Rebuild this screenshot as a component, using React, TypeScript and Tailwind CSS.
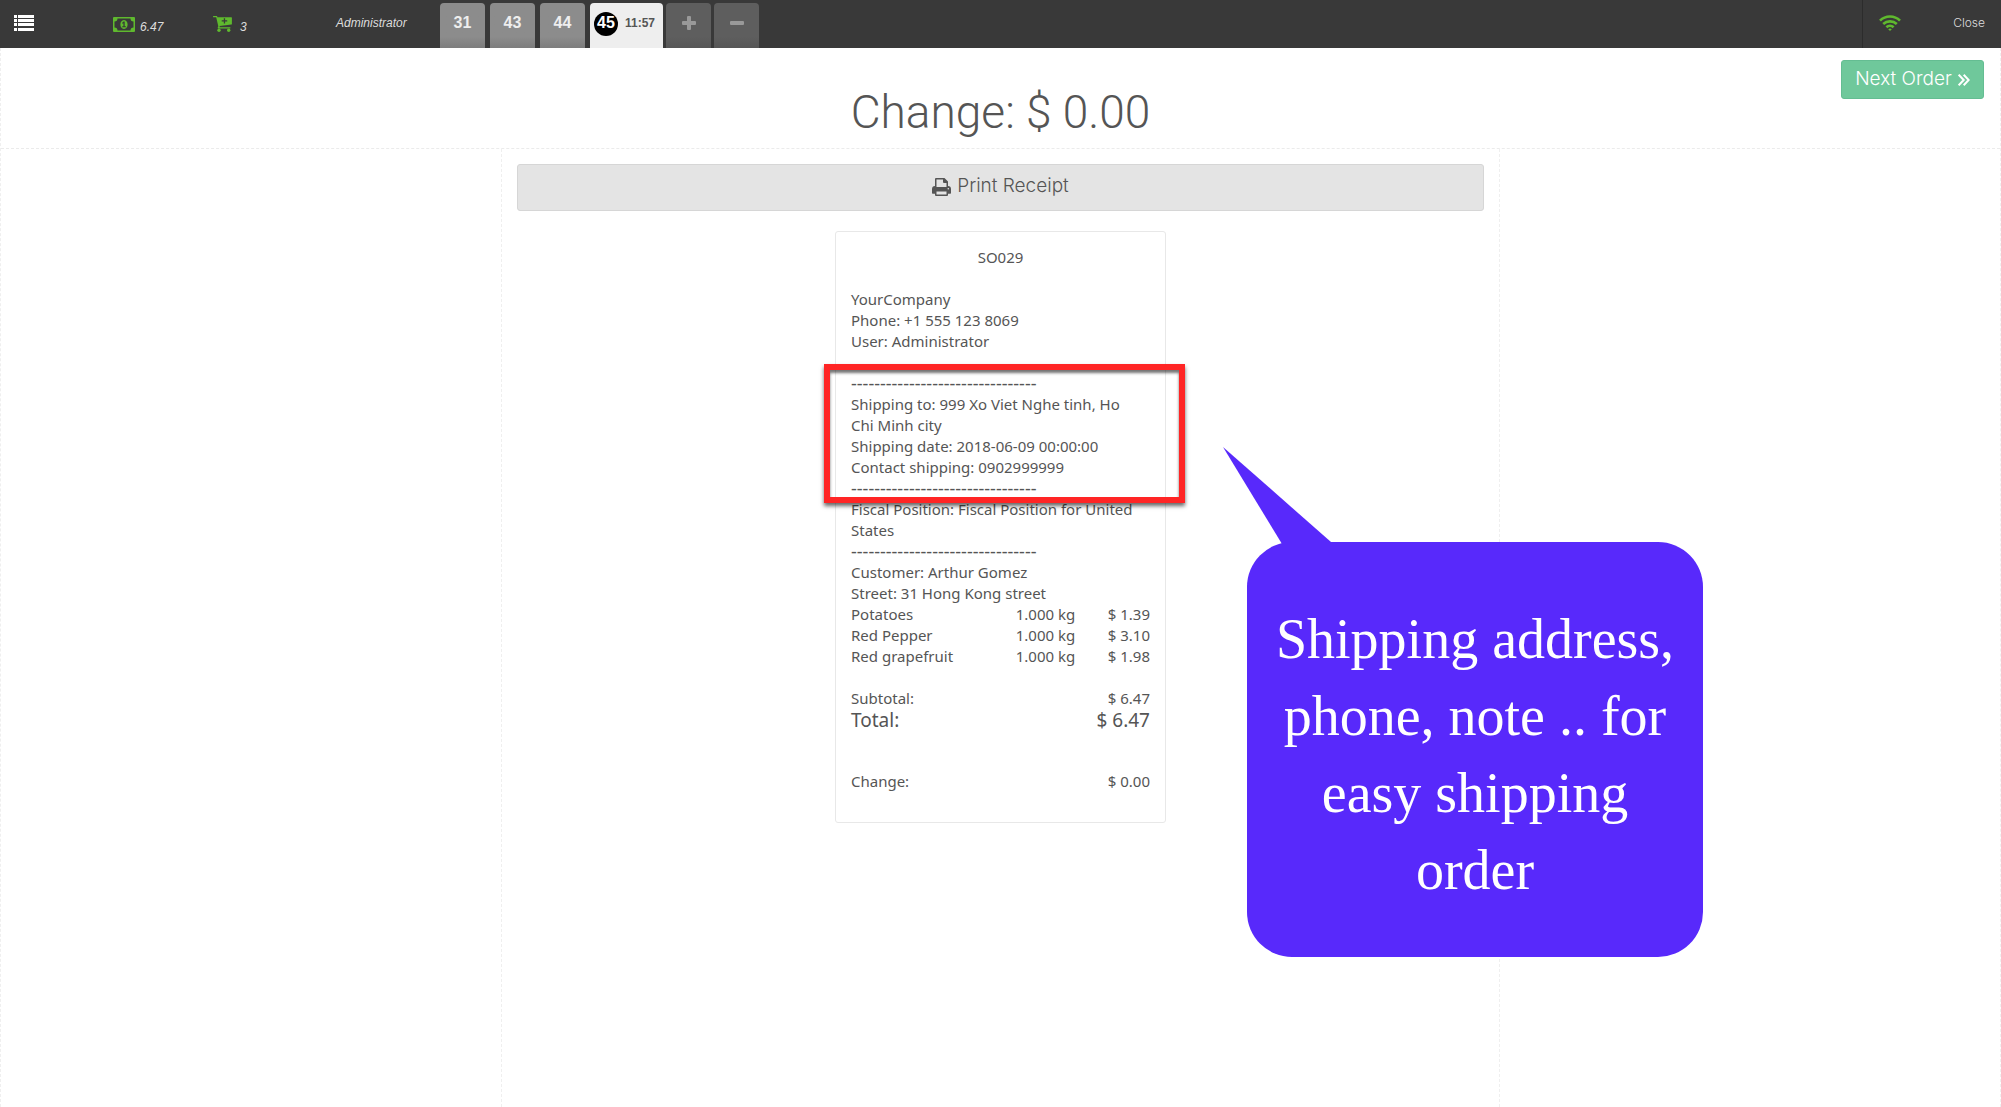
import React from "react";

function ListIcon() {
  return (
    <svg viewBox="0 0 20 16" className="h-4 w-5 fill-white" aria-hidden="true">
      {[0, 4, 8, 13].map((y) => (
        <g key={y}>
          <rect x="0" y={y} width="3" height="3" />
          <rect x="4" y={y} width="16" height="3" />
        </g>
      ))}
    </svg>
  );
}

function MoneyIcon() {
  return (
    <svg viewBox="0 0 22 15" className="h-[15px] w-[22px] fill-[#5fb92e]" aria-hidden="true">
      <path fillRule="evenodd" d="M1 0h20a1 1 0 0 1 1 1v13a1 1 0 0 1-1 1H1a1 1 0 0 1-1-1V1a1 1 0 0 1 1-1ZM4.5 1.5a3 3 0 0 1-3 3v6a3 3 0 0 1 3 3h13a3 3 0 0 1 3-3v-6a3 3 0 0 1-3-3Z" />
      <path fillRule="evenodd" d="M11 3c2.400 0 3.600 2.200 3.600 4.500S13.400 12 11 12s-3.600-2.200-3.600-4.500S8.600 3 11 3Zm-.5 1.600L9 6l.7.8.7-.5v2.900H9.200v1.100h3.700V9.200h-1.200V4.600Z" />
    </svg>
  );
}

function CartIcon() {
  return (
    <svg viewBox="0 0 19 16" className="h-4 w-[19px] fill-[#5fb92e]" aria-hidden="true">
      <path fillRule="evenodd" d="M.6 0h2.900c.5 0 .8.3.9 1.200H18.300a.6.6 0 0 1 .6.700v6a.7.7 0 0 1-.6.600L6.600 10l.1 1.200h10.200a.6.6 0 0 1 0 1.300H5.300a.6.6 0 0 1-.5-.9l.5-1.300L3.200 1.300H.6A.6.6 0 0 1 .6 0ZM10.800 2.300v2H8.700v1.300h2.100v2h1.300v-2h2.100V4.300h-2.100v-2Z" />
      <circle cx="6" cy="14.300" r="1.700" />
      <circle cx="15.700" cy="14.300" r="1.700" />
    </svg>
  );
}

function WifiIcon() {
  return (
    <svg viewBox="0 0 22 16" className="h-4 w-[22px] fill-none stroke-[#5fb92e]" strokeWidth="2.700" aria-hidden="true">
      <path d="M1 5.600a14.200 14.200 0 0 1 20 0M4.200 9a10 10 0 0 1 13.600 0M7.400 12.200a5.500 5.500 0 0 1 7.200 0" />
      <path className="fill-[#5fb92e] stroke-none" d="M9.200 14.200a2.800 2.800 0 0 1 3.600 0L11 16Z" />
    </svg>
  );
}

function PrintIcon() {
  return (
    <svg viewBox="0 0 19 18" className="h-[18px] w-[19px] fill-[#555]" aria-hidden="true">
      <path fillRule="evenodd" d="M4 0h8.500L16 3.500V8a3 3 0 0 1 3 3v4a.7.7 0 0 1-.7.700H16V17a1 1 0 0 1-1 1H4a1 1 0 0 1-1-1v-1.300H.7A.7.700 0 0 1 0 15v-4a3 3 0 0 1 3-3V1a1 1 0 0 1 1-1Zm.5 1.500V9h10V5H12a1 1 0 0 1-1-1V1.500Zm0 12v3h10v-3ZM16.300 10a.8.800 0 1 0 0 1.600.8.800 0 0 0 0-1.600Z" />
    </svg>
  );
}

const orders = ["31", "43", "44"];

const lines = [
  { name: "Potatoes", qty: "1.000 kg", price: "$ 1.39" },
  { name: "Red Pepper", qty: "1.000 kg", price: "$ 3.10" },
  { name: "Red grapefruit", qty: "1.000 kg", price: "$ 1.98" },
];

function Rule() {
  return <div className="text-lg leading-[21px]">--------------------------------</div>;
}

function TopBar() {
  return (
    <header className="flex h-12 items-stretch bg-[#393939] text-xs text-[#ddd]">
      <button aria-label="Menu" className="w-[100px] pb-0.5 pl-3.5">
        <ListIcon />
      </button>
      <div className="flex w-[100px] items-center gap-[5px] pl-[13px] italic">
        <MoneyIcon />
        <span className="pt-1.5">6.47</span>
      </div>
      <div className="flex w-[120px] items-center gap-2 pl-[13px] italic">
        <CartIcon />
        <span className="pt-1.5">3</span>
      </div>
      <div className="flex w-[120px] items-center pb-0.5 pl-4 italic">Administrator</div>
      <nav aria-label="Orders" className="flex items-end gap-[5px]">
        {orders.map((n) => (
          <button
            key={n}
            className="h-[45px] w-[45px] rounded-t bg-gradient-to-b from-[#8c8c8c] from-75% to-[#7d7d7d] pb-1.5 text-base font-bold text-[#eee]"
          >
            {n}
          </button>
        ))}
        <button className="flex h-[45px] w-[73px] items-center gap-[7px] rounded-t bg-[#eee] pb-[3px] pl-1 font-bold text-[#555]">
          <span className="flex size-6 items-center justify-center rounded-full bg-black pb-0.5 text-base text-white">45</span>
          <span className="pb-0.5 text-xs">11:57</span>
        </button>
        <div className="-ml-0.5 flex gap-[3px]">
          {["plus", "minus"].map((kind) => (
            <button
              key={kind}
              aria-label={kind === "plus" ? "New order" : "Remove order"}
              className="flex h-[45px] w-[45px] items-center justify-center rounded-t bg-gradient-to-b from-[#5e5e5e] from-75% to-[#565656] pb-[5px]"
            >
              <svg viewBox="0 0 14 14" className="size-3.5 fill-[#999]" aria-hidden="true">
                <rect x="0" y="5" width="14" height="4" rx="1" />
                {kind === "plus" && <rect x="5" y="0" width="4" height="14" rx="1" />}
              </svg>
            </button>
          ))}
        </div>
      </nav>
      <div className="ml-auto flex w-[139px] items-center justify-between border-l border-[#2c2c2c] pr-4 pb-0.5 pl-4">
        <WifiIcon />
        <button className="font-['Inter',sans-serif] font-light">Close</button>
      </div>
    </header>
  );
}

function Callout() {
  return (
    <aside className="absolute top-[310px] left-[411px] flex h-[415px] w-[456px] items-center justify-center rounded-[45px] bg-[#5829fb] text-center">
      <svg viewBox="0 0 110 97" className="absolute -top-[95px] -left-6 h-[97px] w-[110px] fill-[#5829fb]" aria-hidden="true">
        <path d="M0 0 108 95V97H59Z" />
      </svg>
      <p className="pt-2.5 font-['Liberation_Serif',serif] text-[56px] leading-[77px] text-white">
        Shipping address,
        <br />
        phone, note .. for
        <br />
        easy shipping
        <br />
        order
      </p>
    </aside>
  );
}

function Receipt() {
  return (
    <section
      aria-label="Receipt"
      className="relative mx-auto mt-5 w-[331px] rounded-[3px] border border-[#e8e8e8] bg-white px-[15px] pt-[15px] pb-[30px] font-['Noto_Sans',sans-serif] text-[15px] leading-[21px] text-[#555]"
    >
      <div className="text-center">SO029</div>
      <div className="mt-[21px]">YourCompany</div>
      <div>Phone: +1 555 123 8069</div>
      <div className="mb-[21px]">User: Administrator</div>
      <Rule />
      <div>
        Shipping to: 999 Xo Viet Nghe tinh, Ho
        <br />
        Chi Minh city
      </div>
      <div>Shipping date: 2018-06-09 00:00:00</div>
      <div>Contact shipping: 0902999999</div>
      <Rule />
      <div>Fiscal Position: Fiscal Position for United States</div>
      <Rule />
      <div>Customer: Arthur Gomez</div>
      <div>Street: 31 Hong Kong street</div>
      <table className="w-full">
        <tbody>
          {lines.map((l) => (
            <tr key={l.name}>
              <td className="w-1/2 p-0">{l.name}</td>
              <td className="w-1/4 p-0 text-right">{l.qty}</td>
              <td className="w-1/4 p-0 text-right">{l.price}</td>
            </tr>
          ))}
        </tbody>
      </table>
      <table className="mt-[21px] w-full">
        <tbody>
          <tr>
            <td className="p-0">Subtotal:</td>
            <td className="p-0 text-right">$ 6.47</td>
          </tr>
          <tr className="text-[19px] leading-[22px]">
            <td className="p-0">Total:</td>
            <td className="p-0 text-right">$ 6.47</td>
          </tr>
        </tbody>
      </table>
      <table className="mt-10 w-full">
        <tbody>
          <tr>
            <td className="p-0">Change:</td>
            <td className="p-0 text-right">$ 0.00</td>
          </tr>
        </tbody>
      </table>
      <div className="absolute top-[132px] -left-3 h-[139px] w-[361px] border-6 border-[#ff2525] shadow-[0_3px_4px_rgba(0,0,0,0.6),inset_0_3px_3px_rgba(0,0,0,0.55)]" />
      <Callout />
    </section>
  );
}

export default function App() {
  return (
    <div className="flex min-h-screen flex-col overflow-x-hidden bg-white font-['Liberation_Sans',sans-serif]">
      <TopBar />
      <div className="flex flex-1 flex-col border-x border-dashed border-[#efefef]">
        <div className="flex h-[101px] items-start border-b border-dashed border-[#ebebeb] px-4 pt-3">
          <div className="flex-1" />
          <h1 className="pt-6 font-['Roboto',sans-serif] text-[46px] leading-[56px] font-light text-[#555]">Change: $ 0.00</h1>
          <div className="flex flex-1 justify-end">
            <button className="flex h-[39px] w-[143px] items-center justify-center gap-1.5 rounded-[3px] border border-[#64bd92] bg-[#6fc89b] font-['Inter',sans-serif] text-[19px] font-light text-white">
              Next Order
              <svg viewBox="0 0 12 12" className="size-3 fill-none stroke-white" strokeWidth="2" aria-hidden="true">
                <path d="m.7.7 5 5.300-5 5.300M5.700.7l5 5.300-5 5.300" />
              </svg>
            </button>
          </div>
        </div>
        <main className="mx-auto w-1/2 flex-1 border-x border-dashed border-[#efefef] px-[15px] pt-[15px]">
          <button className="flex h-[47px] w-full items-center justify-center gap-1.5 rounded-[3px] border border-[#d6d6d6] bg-[#e4e4e4] pb-0.5 font-['Inter',sans-serif] text-[19px] font-light text-[#555]">
            <PrintIcon />
            Print Receipt
          </button>
          <Receipt />
        </main>
      </div>
    </div>
  );
}
